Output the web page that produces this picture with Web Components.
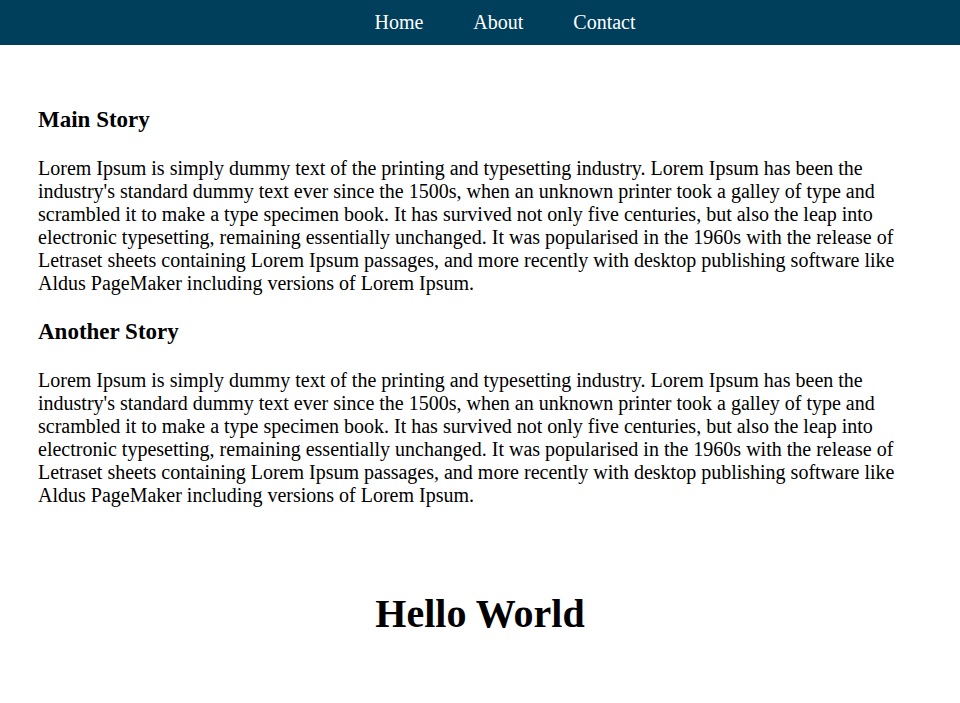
<!DOCTYPE html>
<html lang="en">
<head>
<meta charset="utf-8">
<title>Stories</title>
<style>
body { margin: 0; background: #fff; color: #000; font: 20px/23px "Liberation Serif", "Times New Roman", serif; }
</style>
</head>
<body>
<story-page>
  <nav-bar>
    <nav-link href="#home">Home</nav-link>
    <nav-link href="#about">About</nav-link>
    <nav-link href="#contact">Contact</nav-link>
  </nav-bar>
  <story-list>
    <story-item heading="Main Story">Lorem Ipsum is simply dummy text of the printing and typesetting industry. Lorem Ipsum has been the industry's standard dummy text ever since the 1500s, when an unknown printer took a galley of type and scrambled it to make a type specimen book. It has survived not only five centuries, but also the leap into electronic typesetting, remaining essentially unchanged. It was popularised in the 1960s with the release of Letraset sheets containing Lorem Ipsum passages, and more recently with desktop publishing software like Aldus PageMaker including versions of Lorem Ipsum.</story-item>
    <story-item heading="Another Story">Lorem Ipsum is simply dummy text of the printing and typesetting industry. Lorem Ipsum has been the industry's standard dummy text ever since the 1500s, when an unknown printer took a galley of type and scrambled it to make a type specimen book. It has survived not only five centuries, but also the leap into electronic typesetting, remaining essentially unchanged. It was popularised in the 1960s with the release of Letraset sheets containing Lorem Ipsum passages, and more recently with desktop publishing software like Aldus PageMaker including versions of Lorem Ipsum.</story-item>
  </story-list>
  <page-greeting>Hello World</page-greeting>
</story-page>
<script>
const define = (name, html, setup) => {
  const template = document.createElement("template");
  template.innerHTML = html;
  customElements.define(name, class extends HTMLElement {
    constructor() {
      super();
      this.attachShadow({ mode: "open" }).append(template.content.cloneNode(true));
    }
    connectedCallback() {
      if (setup) setup(this, this.shadowRoot);
    }
  });
};

define("story-page", `<style>:host { display: block; }</style><slot></slot>`);

define("nav-bar", `
  <style>
    :host { display: block; background: #003f5c; }
    nav { display: flex; justify-content: center; gap: 50px; padding: 11px 0 11px 50px; }
  </style>
  <nav><slot></slot></nav>`);

define("nav-link", `
  <style>
    :host { display: block; }
    a { color: #fff; text-decoration: none; }
  </style>
  <a><slot></slot></a>`, (el, root) => {
  root.querySelector("a").href = el.getAttribute("href");
});

define("story-list", `
  <style>
    :host { display: flex; flex-direction: column; gap: 24px; padding: 62px 38px 0; }
  </style>
  <slot></slot>`);

define("story-item", `
  <style>
    :host { display: block; }
    h3 { margin: 0 0 24px; font-size: 23px; line-height: 26px; }
    p { margin: 0; }
  </style>
  <article><h3></h3><p><slot></slot></p></article>`, (el, root) => {
  root.querySelector("h3").textContent = el.getAttribute("heading");
});

define("page-greeting", `
  <style>
    :host { display: block; padding: 84px 0 60px; text-align: center; }
    h1 { margin: 0; font-size: 40px; line-height: 46px; }
  </style>
  <h1><slot></slot></h1>`);
</script>
</body>
</html>
